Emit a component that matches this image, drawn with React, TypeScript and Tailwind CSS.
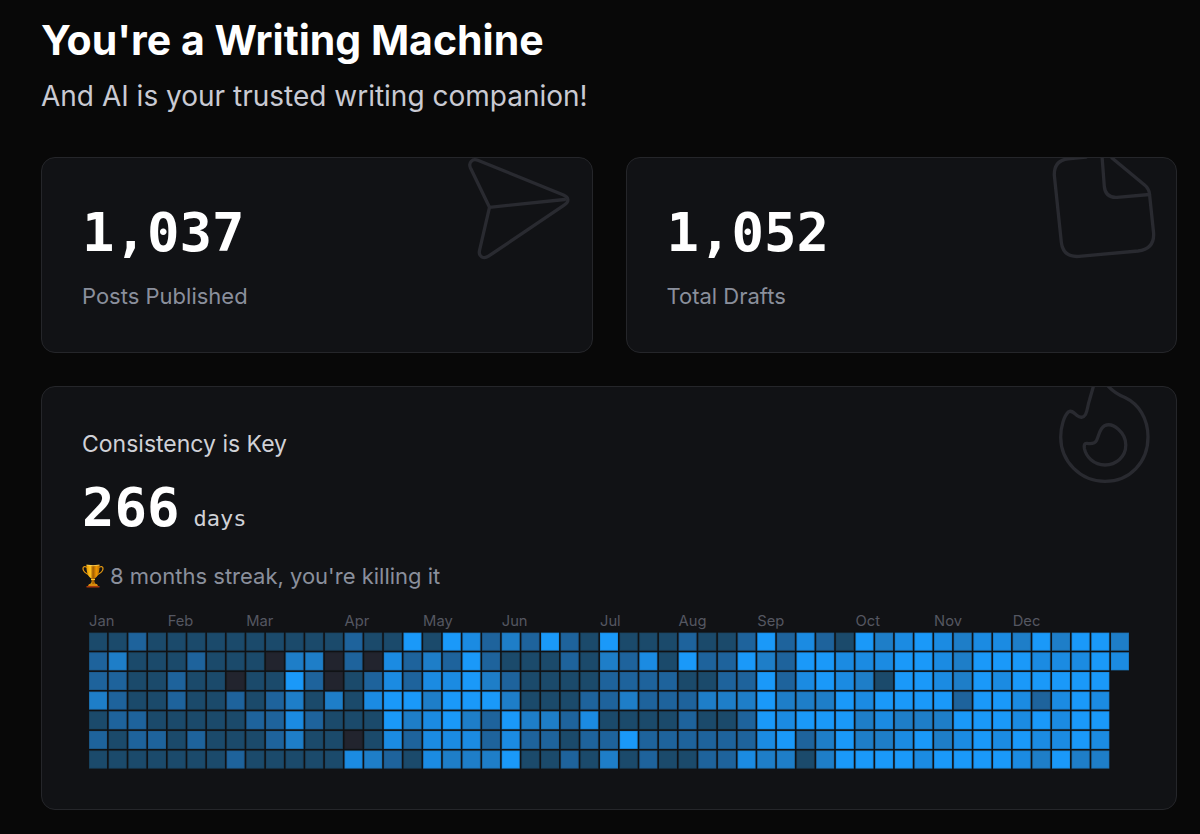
import React from 'react';

const LEVEL_COLORS = ['#22242e', '#1b4a6b', '#1e639c', '#1e7ec8', '#1b8be2', '#1a99f9'];

// One row per weekday, one digit per week, grouped by 13 weeks. Each digit is an index in LEVEL_COLORS.
const WEEKDAYS = [
  ['1121111111111', '2115154232521', '5111211252421', '5345434435355', '3'],
  ['2311121110330', '2042325211121', '3241522532554', '4455435554445', '4'],
  ['2211211011520', '1242445321111', '2222112252454', '3155435455555', ''],
  ['3211211212313', '1455355531112', '2322233353335', '4555525542454', ''],
  ['1221111122421', '1153453253324', '1111211254555', '3433355545455', ''],
  ['2122121112311', '0142444242212', '2522222245235', '3345345454454', ''],
  ['1111111211111', '4321433351121', '3121122433135', '5554555543533', ''],
];

const MONTHS = [
  { name: 'Jan', week: 0 },
  { name: 'Feb', week: 4 },
  { name: 'Mar', week: 8 },
  { name: 'Apr', week: 13 },
  { name: 'May', week: 17 },
  { name: 'Jun', week: 21 },
  { name: 'Jul', week: 26 },
  { name: 'Aug', week: 30 },
  { name: 'Sep', week: 34 },
  { name: 'Oct', week: 39 },
  { name: 'Nov', week: 43 },
  { name: 'Dec', week: 47 },
];

const PLANE = [
  'M27.5 49.3 8.5 10C6 4.5 10.5 .2 15.8 2.3L101.5 37c5.5 2.2 5.8 6.8 1 9.8L26.5 98.2c-5 3.3-10.3.3-9-5.7Z',
  'M27.5 49.3 102.5 41.5',
];

const NOTE = [
  'M66 0 98 26.5Q103 30.5 103.5 36L107.6 75Q108.5 91 92 93L33 98.4Q17 99.5 15.3 84L8.3 17Q8 2.5 22 .8L40-.8',
  'M56-2 58.3 28.5Q59.5 40 71 39.3L103.5 36.5',
];

const FLAME = [
  'M47.5-1 43.5 13C41.5 19 41.5 24 39.5 27.5C37.5 31 34 31 31 28.5C27.5 25.5 25.5 23 22.5 24.8C18 29 14.7 40 14.7 50A44.2 44.4 0 0 0 59 94.4C84 94.4 102 75 102 50C102 31 92.5 17 79 10.5C71 7.5 66 3.5 61-2',
  'M41 56.4C45 57 48.5 57.3 50.5 53.5C53 48.5 53.5 41.5 58.5 38.8C67 34.5 79.8 46 79.8 58C79.8 70 70 78 59 78C47.5 78 40 69.5 38.4 61.5C37.8 58 38.5 56 41 56.4Z',
];

const CornerIcon: React.FC<{ paths: string[] }> = ({ paths }) => (
  <svg
    aria-hidden="true"
    viewBox="0 0 130 130"
    className="absolute right-0 top-0 h-[130px] w-[130px] fill-none stroke-[#292a30]"
    strokeWidth="3.3"
    strokeLinecap="round"
    strokeLinejoin="round"
  >
    {paths.map((d) => (
      <path key={d} d={d} />
    ))}
  </svg>
);

const Trophy: React.FC = () => (
  <svg aria-hidden="true" viewBox="0 0 22 24" className="h-6 w-[22px] shrink-0">
    <defs>
      <linearGradient id="cup">
        <stop offset="0" stopColor="#e89a00" />
        <stop offset="0.3" stopColor="#ffc21f" />
        <stop offset="0.5" stopColor="#a05a00" />
        <stop offset="0.75" stopColor="#ee9600" />
        <stop offset="1" stopColor="#c07400" />
      </linearGradient>
    </defs>
    <path
      d="M6 4C3 1.5 .8 2.5 1 5C1.5 8.5 5 10 8 11.5M16 4C19 1.5 21.2 2.5 21 5C20.5 8.5 17 10 14 11.5"
      fill="none"
      stroke="#dd9310"
      strokeWidth="1.3"
    />
    <path d="M4.5 1H17.5C17.8 8.5 16 12.5 12.4 14.8V18L14 20.5H8L9.6 18V14.8C6 12.5 4.2 8.5 4.5 1Z" fill="url(#cup)" />
    <path d="M4.5 1Q11 2.5 17.5 1" fill="none" stroke="#ffd65c" strokeWidth="0.8" />
    <path d="M9 15.5H13" stroke="#ffc72e" />
    <path d="M7 20H15L16 22H6Z" fill="#d98b0c" />
    <path d="M4.5 22H17.5V23.5H4.5Z" fill="#a8380c" />
  </svg>
);

const Card: React.FC<{ icon: string[]; children: React.ReactNode }> = ({ icon, children }) => (
  <section className="relative overflow-hidden rounded-[14px] border border-[#25262a] bg-[#111215] p-10">
    <CornerIcon paths={icon} />
    {children}
  </section>
);

const StatCard: React.FC<{ icon: string[]; value: string; label: string }> = ({ icon, value, label }) => (
  <Card icon={icon}>
    <p className="font-['DejaVu_Sans_Mono',monospace] text-[54px] font-bold leading-[70px] text-white">{value}</p>
    <p className="mt-3 text-[22px] leading-8 text-[#8a8f9c]">{label}</p>
  </Card>
);

const Heatmap: React.FC = () => (
  <svg viewBox="0 0 635 95" className="block w-full" role="img" aria-label="Posts per day">
    {MONTHS.map(({ name, week }) => (
      <text key={name} x={week * 12} y={8} fontSize={9} className="fill-[#555761]">
        {name}
      </text>
    ))}
    {WEEKDAYS.map((quarters, day) =>
      quarters.join('').split('').map((level, week) => (
        <rect
          key={`${day}-${week}`}
          x={week * 12}
          y={12 + day * 12}
          width={11}
          height={11}
          fill={LEVEL_COLORS[Number(level)]}
          stroke="#1b1f23"
          strokeOpacity={0.12}
        />
      ))
    )}
  </svg>
);

export default function App() {
  return (
    <main className="min-h-screen bg-[#080808] pb-6 pl-[41px] pr-[23px] pt-[15px] font-['Inter',sans-serif]">
      <header>
        <h1 className="text-[41px] font-bold leading-[50px] text-white">You're a Writing Machine</h1>
        <p className="mt-2.5 text-[28px] leading-[42px] text-[#c9cad3]">And AI is your trusted writing companion!</p>
      </header>

      <div className="mt-10 grid grid-cols-2 gap-[33px]">
        <StatCard icon={PLANE} value="1,037" label="Posts Published" />
        <StatCard icon={NOTE} value="1,052" label="Total Drafts" />
      </div>

      <div className="mt-[33px]">
        <Card icon={FLAME}>
          <h2 className="text-[23px] leading-[34px] text-[#d0d1d7]">Consistency is Key</h2>
          <p className="mt-3 flex items-baseline gap-3.5 font-['DejaVu_Sans_Mono',monospace]">
            <span className="text-[54px] font-bold leading-[70px] text-white">266</span>
            <span className="text-[22px] leading-8 text-[#d0d1d7]">days</span>
          </p>
          <p className="mt-4 flex items-center gap-1.5 text-[22px] leading-[34px] text-[#8a8f9c]">
            <Trophy />
            8 months streak, you're killing it
          </p>
          <div className="mt-5 px-[7px]">
            <Heatmap />
          </div>
        </Card>
      </div>
    </main>
  );
}
